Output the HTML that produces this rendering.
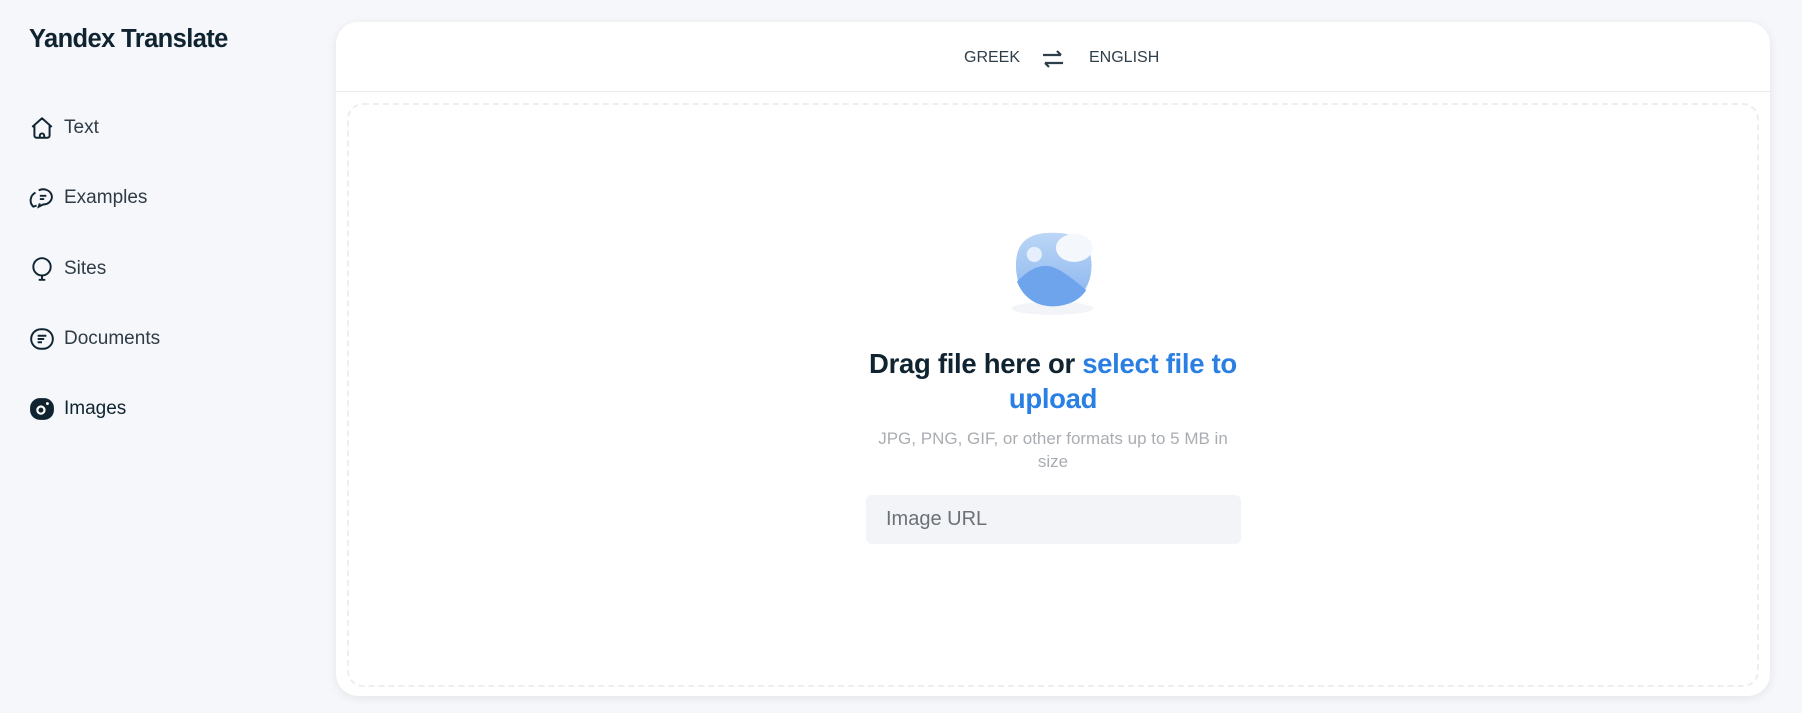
<!DOCTYPE html>
<html><head><meta charset="utf-8"><style>
*{margin:0;padding:0;box-sizing:border-box}
body{width:1802px;height:713px;background:#f5f7fa;font-family:"Liberation Sans",sans-serif;position:relative;overflow:hidden;color:#1a2a33}
.title{position:absolute;left:29px;top:25px;font-size:25.5px;font-weight:bold;color:#0f2330;letter-spacing:-0.6px}
.nav{position:absolute;left:29px;display:flex;align-items:center;font-size:19px;color:#2f3c45}
.nav svg{width:26px;height:26px;margin-right:9px}
.card{position:absolute;left:336px;top:22px;width:1434px;height:674px;background:#fff;border-radius:22px;box-shadow:0 2px 10px rgba(0,0,0,.08)}
.hdr{position:absolute;left:0;top:0;width:100%;height:70px;border-bottom:1px solid #e8eaed}
.lang{position:absolute;top:27px;font-size:16px;color:#2f3f4a;font-weight:500}
.drop{position:absolute;left:11px;top:81px;width:1412px;height:584px;border:2px dashed #eceef1;border-radius:16px}
.h{position:absolute;left:0;width:100%;text-align:center}
</style></head><body>
<div class="title">Yandex Translate</div>
<div class="nav" style="top:115px"><svg viewBox="0 0 24 24" fill="none" stroke="#0f2330" stroke-width="1.8" stroke-linejoin="round"><path d="M3 11L12 3l9 8M5 9.5V19a2 2 0 002 2h10a2 2 0 002-2V9.5M10 21v-2a2 2 0 014 0v2"/></svg>Text</div>
<div class="nav" style="top:185px"><svg viewBox="0 0 24 24" fill="none" stroke="#0f2330" stroke-width="1.8"><path d="M9 5a8 7 0 1 1 4 13l-4 2 1-3"/><path d="M6 7a8 8 0 0 0-2 13l3-1"/><path d="M10 10h6M10 13h4"/></svg>Examples</div>
<div class="nav" style="top:256px"><svg viewBox="0 0 24 24" fill="none" stroke="#0f2330" stroke-width="1.8"><circle cx="12" cy="10" r="8"/><path d="M12 18v4M9 22h6"/></svg>Sites</div>
<div class="nav" style="top:326px"><svg viewBox="0 0 24 24" fill="none" stroke="#0f2330" stroke-width="1.8"><rect x="2" y="3" width="20" height="18" rx="9"/><path d="M8 9h8M8 12h6M8 15h4"/></svg>Documents</div>
<div class="nav" style="top:396px;color:#0f2330"><svg viewBox="0 0 24 24"><rect x="1" y="2" width="22" height="20" rx="9" fill="#0f2330"/><circle cx="11" cy="13" r="3.3" fill="none" stroke="#fff" stroke-width="2"/><circle cx="17" cy="7" r="1.3" fill="#fff"/></svg>Images</div>
<div class="card">
 <div class="hdr">
  <div class="lang" style="left:628px">GREEK</div>
  <svg style="position:absolute;left:706px;top:27px" width="22" height="20" viewBox="0 0 22 20" fill="none" stroke="#2f3f4a" stroke-width="2.2"><path d="M1 6h18M15 2l4 4M21 14H3M7 18l-4-4"/></svg>
  <div class="lang" style="left:753px">ENGLISH</div>
 </div>
 <div class="drop"></div>
 <svg style="position:absolute;left:667px;top:200px" width="108" height="108" viewBox="0 0 100 100">
  <defs><linearGradient id="g" x1="0" y1="0" x2="0" y2="1"><stop offset="0" stop-color="#bcd6f6"/><stop offset="1" stop-color="#86b3ef"/></linearGradient></defs>
  <ellipse cx="46" cy="80" rx="38" ry="6" fill="#f2f4f7"/>
  <path d="M12 40c0-22 12-30 34-30s36 8 36 30-14 38-36 38S12 62 12 40z" fill="url(#g)"/>
  <path d="M13 55c10-10 20-16 30-14s22 12 34 22c-6 10-18 15-31 15-16 0-28-9-33-23z" fill="#6ea4ec"/>
  <circle cx="29" cy="30" r="7" fill="#e6f0fc"/>
  <ellipse cx="66" cy="24" rx="17" ry="13" fill="#f4f7fb"/>
 </svg>
 <div class="h" style="top:324px;font-size:27.5px;font-weight:600;line-height:35px;color:#0f2330;letter-spacing:-0.3px">Drag file here or <span style="color:#2a7fe3">select file to</span><br><span style="color:#2a7fe3">upload</span></div>
 <div class="h" style="top:405px;font-size:17px;line-height:23px;color:#a9adb2">JPG, PNG, GIF, or other formats up to 5 MB in<br>size</div>
 <div style="position:absolute;left:530px;top:473px;width:375px;height:49px;background:#f2f4f7;border-radius:6px;font-size:20px;color:#6b7178;padding:13px 20px">Image URL</div>
</div>
</body></html>
